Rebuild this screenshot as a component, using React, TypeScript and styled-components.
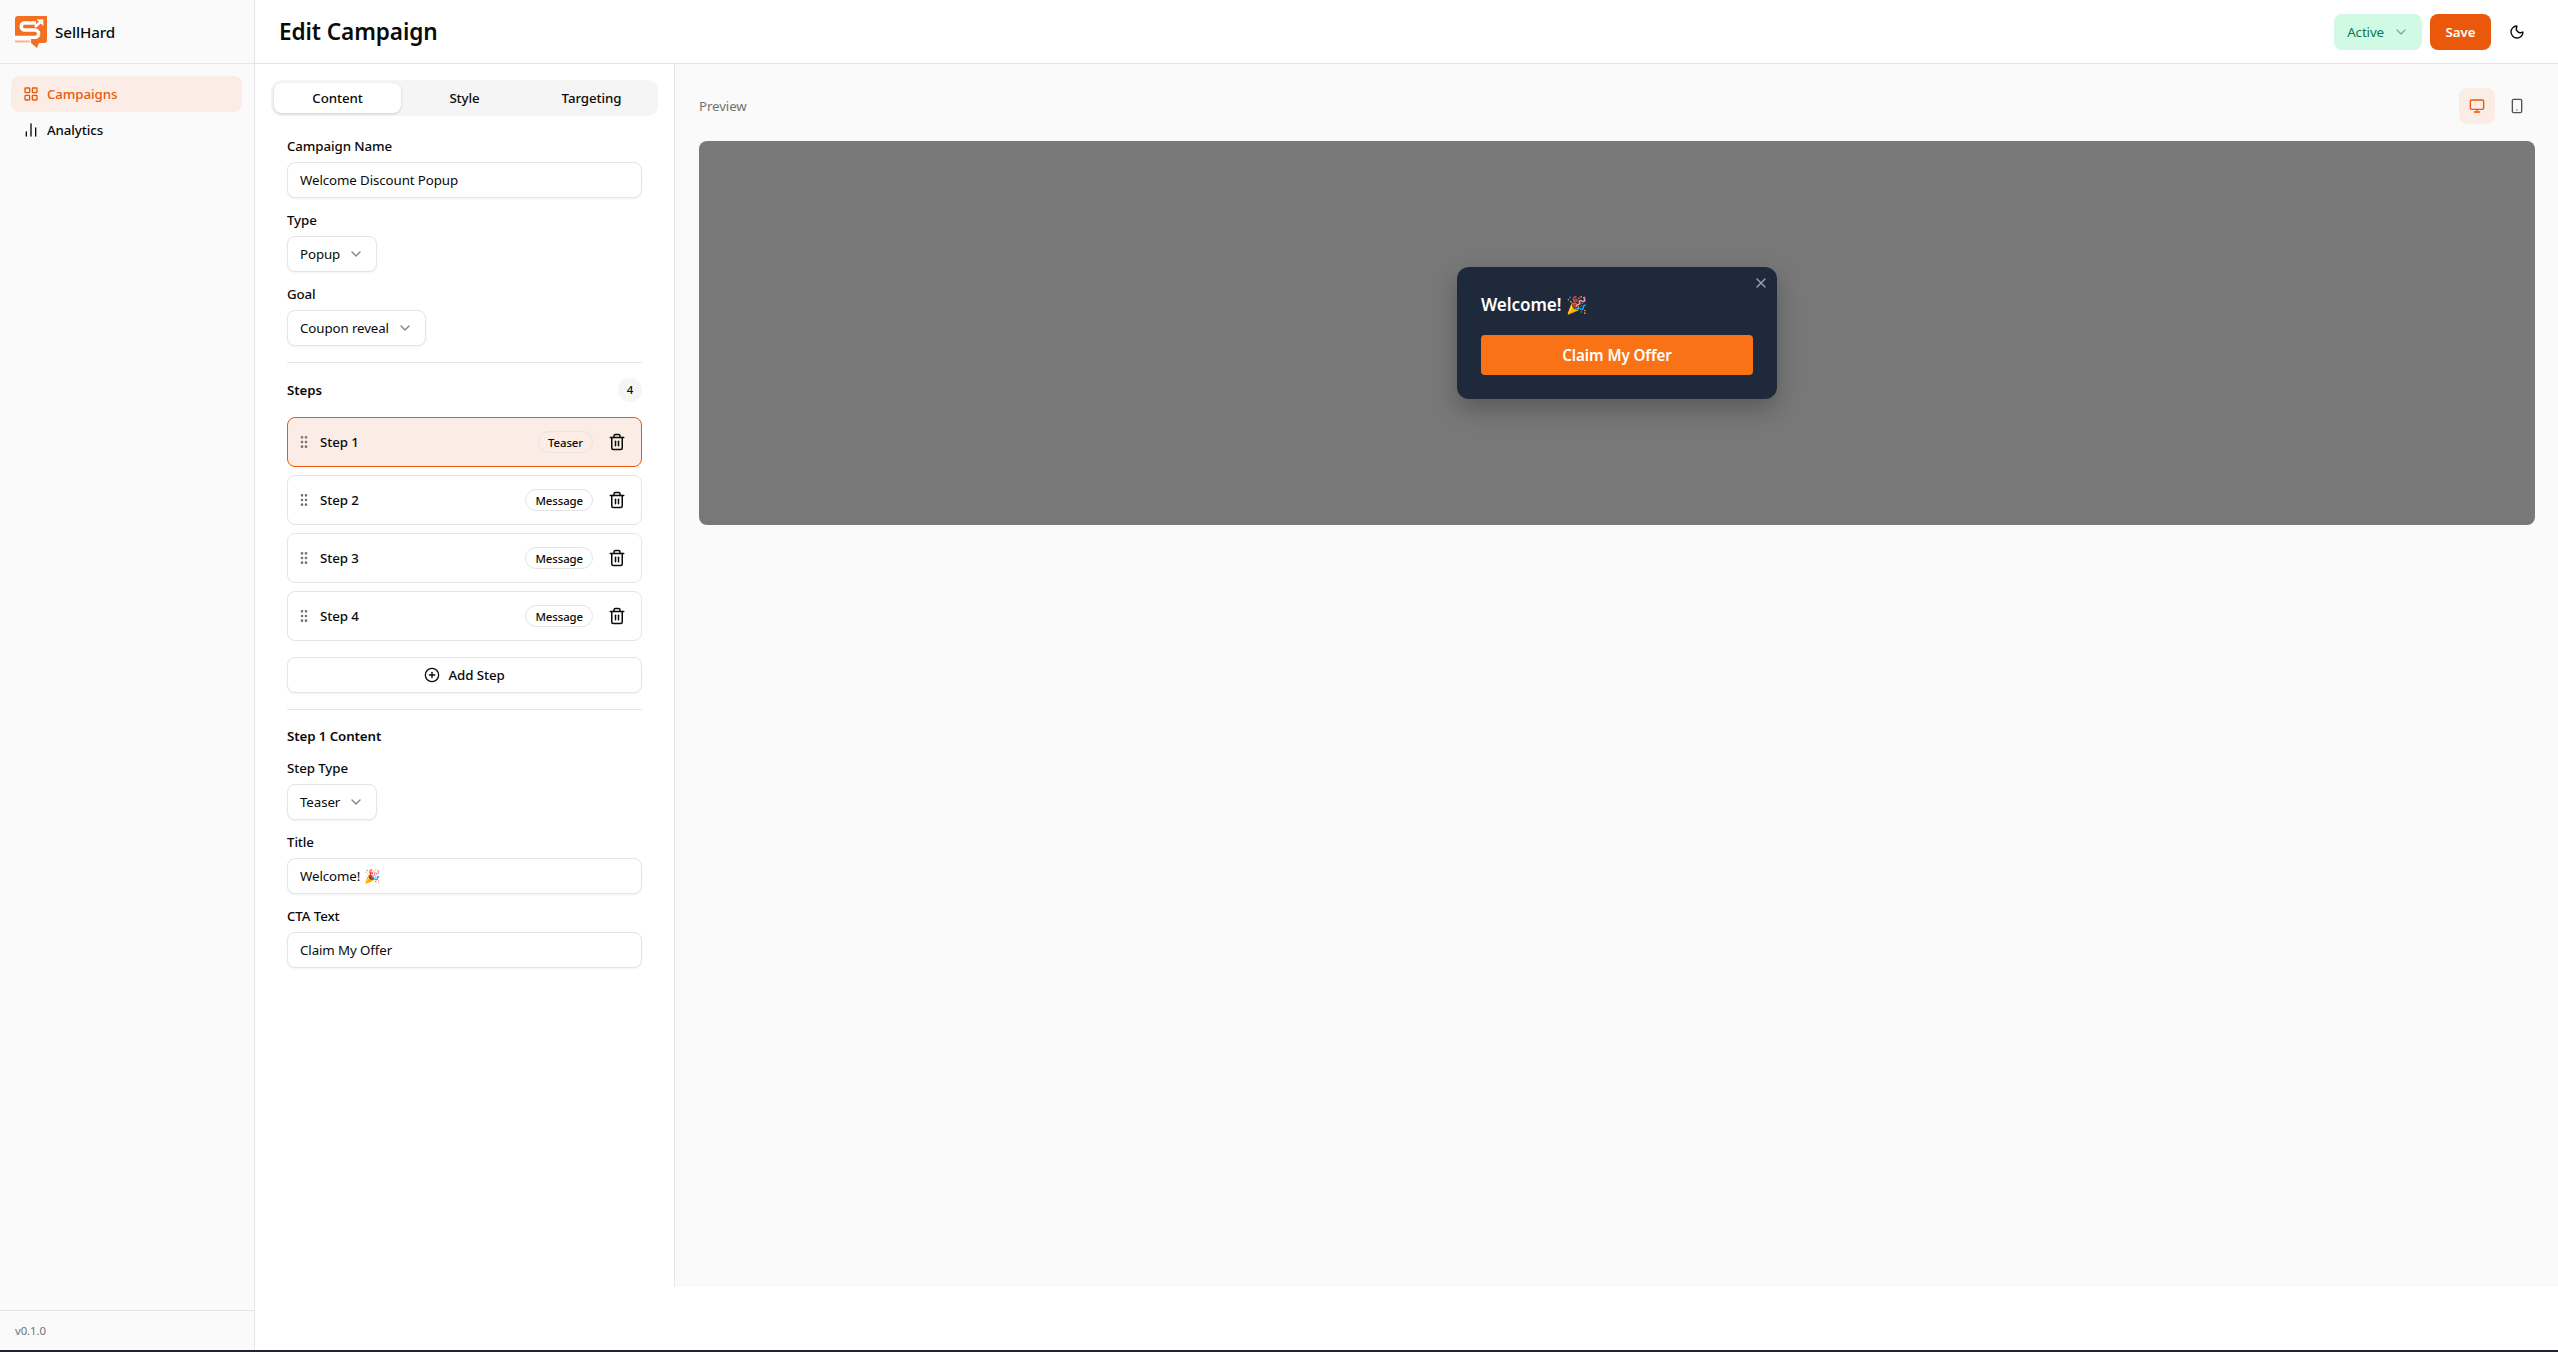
import React from "react";
import styled, { createGlobalStyle } from "styled-components";
import { ChevronDown, GripVertical, LayoutGrid, ChartNoAxesColumn, Moon, Monitor, Smartphone, Trash2, CirclePlus, X } from "lucide-react";

const GlobalStyle = createGlobalStyle`
  html, body { margin: 0; padding: 0; background: #fff; }
  * { box-sizing: border-box; }
  body { font-family: "Noto Sans", "Open Sans", sans-serif; color: #0a0a0a; letter-spacing: -0.006em; }
  button { font-family: inherit; letter-spacing: inherit; }
`;

const Shell = styled.div`
  display: flex;
  height: 1350px;
`;

const BottomEdge = styled.div`
  height: 2px;
  background: #1f2430;
`;

const Sidebar = styled.aside`
  width: 255px;
  flex: none;
  display: flex;
  flex-direction: column;
  background: #fafafa;
  border-right: 1px solid #e5e5e5;
`;

const Brand = styled.div`
  height: 64px;
  flex: none;
  display: flex;
  align-items: center;
  gap: 8px;
  padding: 0 15px;
  border-bottom: 1px solid #e5e5e5;
  font-size: 15.2px;
  font-weight: 500;
`;

const Nav = styled.nav`
  flex: 1;
  display: flex;
  flex-direction: column;
  padding: 12px 12px 12px 11px;
`;

const NavItem = styled.a<{ $active?: boolean }>`
  display: flex;
  align-items: center;
  gap: 8px;
  height: 36px;
  padding: 0 12px;
  border-radius: 8px;
  font-size: 13.3px;
  font-weight: 500;
  color: ${(p) => (p.$active ? "#ea580c" : "#0a0a0a")};
  background: ${(p) => (p.$active ? "#fcece6" : "transparent")};
`;

const Version = styled.div`
  height: 40px;
  flex: none;
  display: flex;
  align-items: center;
  padding: 0 15px;
  border-top: 1px solid #e5e5e5;
  font-size: 11.4px;
  color: #737373;
`;

const Main = styled.main`
  flex: 1;
  display: flex;
  flex-direction: column;
  min-width: 0;
`;

const Header = styled.header`
  height: 64px;
  flex: none;
  display: flex;
  align-items: center;
  justify-content: space-between;
  padding: 0 23px 0 24px;
  border-bottom: 1px solid #e5e5e5;
`;

const Title = styled.h1`
  margin: 0;
  font-size: 22.6px;
  font-weight: 600;
`;

const HeaderActions = styled.div`
  display: flex;
  align-items: center;
  gap: 8px;
`;

const StatusSelect = styled.div`
  display: flex;
  align-items: center;
  gap: 9px;
  height: 36px;
  padding: 0 13px;
  border-radius: 8px;
  background: #d1fae5;
  color: #047857;
  font-size: 13.3px;
`;

const SaveButton = styled.button`
  height: 36px;
  width: 61px;
  padding: 0;
  border: 0;
  border-radius: 8px;
  background: #ea580c;
  color: #fff;
  font-size: 13.3px;
  font-weight: 600;
`;

const IconButton = styled.button<{ $active?: boolean }>`
  width: 36px;
  height: 36px;
  display: flex;
  align-items: center;
  justify-content: center;
  border: 0;
  padding: 0;
  border-radius: 8px;
  background: ${(p) => (p.$active ? "#fcece6" : "transparent")};
  color: ${(p) => (p.$active ? "#ea580c" : "#525252")};
`;

const Workspace = styled.div`
  display: flex;
  height: 1223px;
  flex: none;
`;

const Editor = styled.section`
  width: 420px;
  flex: none;
  padding: 16px 16px;
  border-right: 1px solid #e5e5e5;
`;

const Tabs = styled.div`
  display: grid;
  grid-template-columns: repeat(3, 1fr);
  height: 36px;
  padding: 3px;
  border-radius: 10px;
  background: #f5f5f5;
`;

const Tab = styled.div<{ $active?: boolean }>`
  display: flex;
  align-items: center;
  justify-content: center;
  border-radius: 8px;
  font-size: 13.3px;
  font-weight: 500;
  background: ${(p) => (p.$active ? "#fff" : "transparent")};
  box-shadow: ${(p) => (p.$active ? "0 1px 3px rgba(0,0,0,.16)" : "none")};
`;

const Form = styled.div`
  display: flex;
  flex-direction: column;
  padding: 20px 16px 0;
`;

const Field = styled.div`
  display: flex;
  flex-direction: column;
  align-items: flex-start;
  gap: 6px;
  margin-bottom: 12px;
`;

const Label = styled.label`
  font-size: 13.3px;
  font-weight: 500;
  line-height: 20px;
`;

const Input = styled.div`
  display: flex;
  align-items: center;
  width: 100%;
  height: 36px;
  padding: 0 12px;
  border: 1px solid #e5e5e5;
  border-radius: 8px;
  background: #fff;
  font-size: 13.3px;
  box-shadow: 0 1px 2px rgba(0,0,0,.05);
`;

const Select = styled(Input)`
  width: auto;
  gap: 8px;
`;

const Divider = styled.hr<{ $top?: number }>`
  width: 100%;
  margin: ${(p) => p.$top ?? 0}px 0 0;
  border: 0;
  border-top: 1px solid #e5e5e5;
`;

const SectionHead = styled.div`
  display: flex;
  align-items: center;
  justify-content: space-between;
  margin: 15px 0;
  font-size: 13.3px;
  font-weight: 600;
  line-height: 24px;
`;

const CountBadge = styled.span`
  display: flex;
  align-items: center;
  justify-content: center;
  width: 24px;
  height: 24px;
  border-radius: 50%;
  background: #f5f5f5;
  font-size: 11.4px;
  font-weight: 500;
`;

const StepList = styled.div`
  display: flex;
  flex-direction: column;
  gap: 8px;
`;

const StepRow = styled.div<{ $active?: boolean }>`
  display: flex;
  align-items: center;
  height: 50px;
  padding: 0 15px 0 8px;
  border: 1px solid ${(p) => (p.$active ? "#ea580c" : "#e5e5e5")};
  border-radius: 8px;
  background: ${(p) => (p.$active ? "#fcece6" : "#fff")};
`;

const StepName = styled.span`
  flex: 1;
  margin-left: 8px;
  font-size: 13.3px;
  font-weight: 500;
`;

const StepKind = styled.span`
  display: flex;
  align-items: center;
  height: 22px;
  padding: 0 9px;
  border: 1px solid #e5e5e5;
  border-radius: 11px;
  font-size: 11.4px;
  font-weight: 500;
`;

const TrashSlot = styled.span`
  display: flex;
  margin-left: 15px;
`;

const AddStep = styled.button`
  display: flex;
  align-items: center;
  justify-content: center;
  gap: 8px;
  width: 100%;
  height: 36px;
  margin: 16px 0;
  border: 1px solid #e5e5e5;
  border-radius: 8px;
  background: #fff;
  color: inherit;
  box-shadow: 0 1px 2px rgba(0,0,0,.05);
  font-size: 13.3px;
  font-weight: 500;
`;

const SubHead = styled.div`
  margin: 16px 0 12px;
  font-size: 13.3px;
  font-weight: 600;
  line-height: 20px;
`;

const PreviewPane = styled.section`
  flex: 1;
  min-width: 0;
  padding: 24px 23px 24px 24px;
  background: #fafafa;
`;

const PreviewBar = styled.div`
  display: flex;
  align-items: center;
  justify-content: space-between;
  height: 36px;
  margin-bottom: 17px;
  font-size: 13.3px;
  color: #737373;
`;

const Toggle = styled.div`
  display: flex;
  gap: 4px;
`;

const Stage = styled.div`
  display: flex;
  align-items: center;
  justify-content: center;
  height: 384px;
  border-radius: 8px;
  background: #787878;
`;

const Popup = styled.div`
  position: relative;
  width: 320px;
  padding: 24px;
  border-radius: 12px;
  background: #1e293b;
  box-shadow: 0 10px 25px rgba(0,0,0,.25);
`;

const PopupClose = styled.span`
  position: absolute;
  top: 8px;
  right: 8px;
  display: flex;
  color: #94a3b8;
`;

const PopupTitle = styled.div`
  margin-bottom: 16px;
  font-size: 17.1px;
  font-weight: 600;
  line-height: 28px;
  color: #fff;
`;

const PopupCta = styled.button`
  display: block;
  width: 100%;
  height: 40px;
  border: 0;
  border-radius: 4px;
  background: #f97316;
  color: #fff;
  font-size: 15.2px;
  font-weight: 600;
`;

// hand drawn SellHard mark: speech bubble with an S that turns into an arrow
const Logo = () => (
  <svg width="32" height="32" viewBox="0 0 32 32" fill="none">
    <path d="M3 0H32V24q0 3-3 3H24l-2 5-6-5V23H0V3q0-3 3-3z" fill="#f37021" />
    <path d="M0 25.5H15" stroke="#f9b48c" strokeWidth="2" />
    <path d="M21 7H9a3.6 3.6 0 0 0 0 7H20a3.6 3.6 0 0 1 0 7.4H0" stroke="#fff" strokeWidth="3.4" />
    <path d="M20 11l7-6.5" stroke="#fff" strokeWidth="2.4" />
    <path d="M21.5 3.4H28.4V10z" fill="#fff" />
  </svg>
);

const steps = [
  { name: "Step 1", kind: "Teaser" },
  { name: "Step 2", kind: "Message" },
  { name: "Step 3", kind: "Message" },
  { name: "Step 4", kind: "Message" },
];

export default function App() {
  return (
    <>
      <GlobalStyle />
      <Shell>
        <Sidebar>
          <Brand>
            <Logo />
            SellHard
          </Brand>
          <Nav>
            <NavItem $active>
              <LayoutGrid size={16} />
              Campaigns
            </NavItem>
            <NavItem>
              <ChartNoAxesColumn size={16} />
              Analytics
            </NavItem>
          </Nav>
          <Version>v0.1.0</Version>
        </Sidebar>
        <Main>
          <Header>
            <Title>Edit Campaign</Title>
            <HeaderActions>
              <StatusSelect>
                Active
                <ChevronDown size={16} opacity={0.5} />
              </StatusSelect>
              <SaveButton>Save</SaveButton>
              <IconButton>
                <Moon size={16} color="#0a0a0a" />
              </IconButton>
            </HeaderActions>
          </Header>
          <Workspace>
            <Editor>
              <Tabs>
                <Tab $active>Content</Tab>
                <Tab>Style</Tab>
                <Tab>Targeting</Tab>
              </Tabs>
              <Form>
                <Field>
                  <Label>Campaign Name</Label>
                  <Input>Welcome Discount Popup</Input>
                </Field>
                <Field>
                  <Label>Type</Label>
                  <Select>
                    Popup
                    <ChevronDown size={16} opacity={0.5} />
                  </Select>
                </Field>
                <Field>
                  <Label>Goal</Label>
                  <Select>
                    Coupon reveal
                    <ChevronDown size={16} opacity={0.5} />
                  </Select>
                </Field>
                <Divider $top={4} />
                <SectionHead>
                  Steps
                  <CountBadge>4</CountBadge>
                </SectionHead>
                <StepList>
                  {steps.map((step, i) => (
                    <StepRow key={step.name} $active={i === 0}>
                      <GripVertical size={16} color="#737373" />
                      <StepName>{step.name}</StepName>
                      <StepKind>{step.kind}</StepKind>
                      <TrashSlot>
                        <Trash2 size={18} />
                      </TrashSlot>
                    </StepRow>
                  ))}
                </StepList>
                <AddStep>
                  <CirclePlus size={16} />
                  Add Step
                </AddStep>
                <Divider />
                <SubHead>Step 1 Content</SubHead>
                <Field>
                  <Label>Step Type</Label>
                  <Select>
                    Teaser
                    <ChevronDown size={16} opacity={0.5} />
                  </Select>
                </Field>
                <Field>
                  <Label>Title</Label>
                  <Input>Welcome! 🎉</Input>
                </Field>
                <Field>
                  <Label>CTA Text</Label>
                  <Input>Claim My Offer</Input>
                </Field>
              </Form>
            </Editor>
            <PreviewPane>
              <PreviewBar>
                Preview
                <Toggle>
                  <IconButton $active>
                    <Monitor size={16} />
                  </IconButton>
                  <IconButton>
                    <Smartphone size={16} />
                  </IconButton>
                </Toggle>
              </PreviewBar>
              <Stage>
                <Popup>
                  <PopupClose>
                    <X size={16} />
                  </PopupClose>
                  <PopupTitle>Welcome! 🎉</PopupTitle>
                  <PopupCta>Claim My Offer</PopupCta>
                </Popup>
              </Stage>
            </PreviewPane>
          </Workspace>
        </Main>
      </Shell>
      <BottomEdge />
    </>
  );
}
